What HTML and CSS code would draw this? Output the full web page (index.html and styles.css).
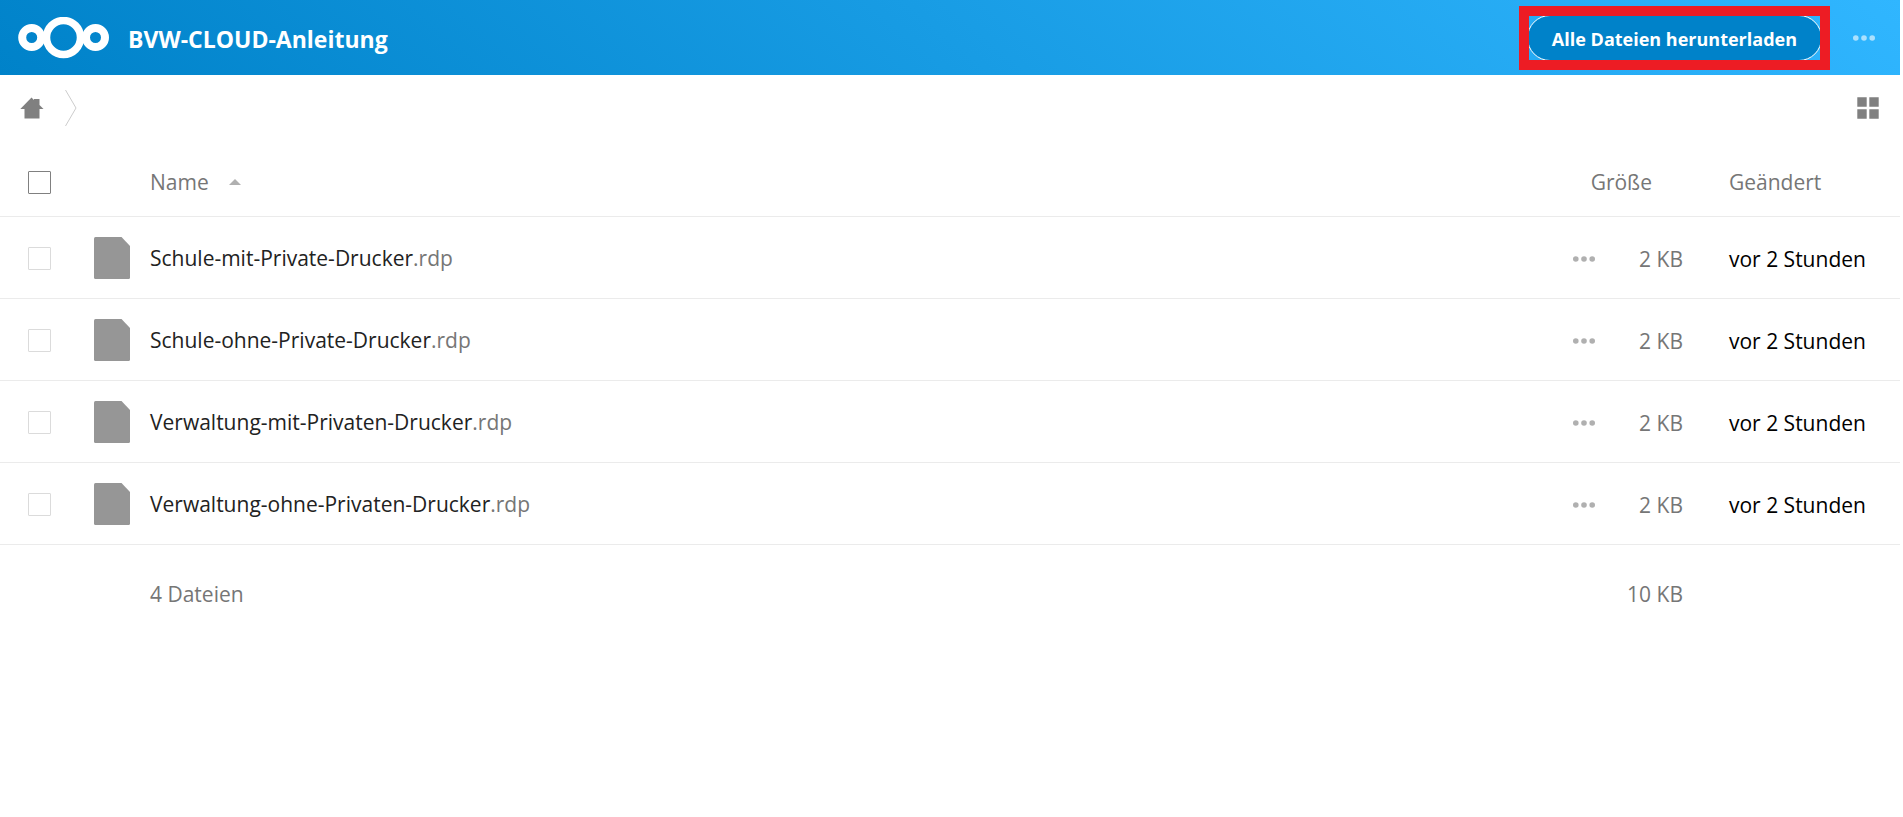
FILE: index.html
```
<!DOCTYPE html>
<html lang="de">
<head>
<meta charset="utf-8">
<title>BVW-CLOUD-Anleitung</title>
<link rel="stylesheet" href="styles.css">
</head>
<body>
    <svg class="sprite" aria-hidden="true">
        <symbol id="file" viewBox="0 0 36 42"><path d="M1.500 0H27.500L36 9V40.500Q36 42 34.500 42H1.500Q0 42 0 40.500V1.500Q0 0 1.500 0Z"/></symbol>
        <symbol id="more" viewBox="0 0 22 6"><circle cx="2.800" cy="3" r="2.800"/><circle cx="11" cy="3" r="2.800"/><circle cx="19.200" cy="3" r="2.800"/></symbol>
    </svg>
    <header class="header">
        <a class="brand" href="#">
            <svg class="logo" viewBox="0 0 92 42" fill="none" stroke="#fff">
                <circle cx="13.700" cy="20.500" r="9.500" stroke-width="8"/>
                <circle cx="45.500" cy="20.500" r="17" stroke-width="7.500"/>
                <circle cx="77.500" cy="20.500" r="9.500" stroke-width="8"/>
            </svg>
            <h1 class="title">BVW-CLOUD-Anleitung</h1>
        </a>
        <div class="header-right">
            <div class="highlight"><button class="download">Alle Dateien herunterladen</button></div>
            <button class="header-menu" aria-label="Weitere Aktionen"><svg class="dots"><use href="#more"/></svg></button>
        </div>
    </header>
    <main class="content">
        <div class="controls">
            <nav class="breadcrumb">
                <a class="home" href="#" aria-label="Startseite"><svg width="24" height="22" viewBox="0 0 24 22"><path d="M11.500 0.500L14 3V2H19.500V8L23.500 12H19.500V21.500H4.500V12H0.300Z"/></svg></a>
                <svg class="crumb" width="12" height="36" viewBox="0 0 12 36"><path d="M0.500 0L11 18L0.500 36"/></svg>
            </nav>
            <button class="view" aria-label="Kachelansicht"><svg width="22" height="22" viewBox="0 0 22 22"><path d="M0.300 0.300h9.400v9.400H0.300zM12.300 0.300h9.400v9.400H12.300zM0.300 12.300h9.400v9.400H0.300zM12.300 12.300h9.400v9.400H12.300z"/></svg></button>
        </div>
        <table class="files">
            <colgroup>
                <col class="col-select">
                <col class="col-icon">
                <col>
                <col class="col-action">
                <col class="col-size">
                <col class="col-date">
            </colgroup>
            <thead>
                <tr>
                    <th class="select"><input type="checkbox" class="check check-all" aria-label="Alle auswählen"></th>
                    <th class="icon"></th>
                    <th class="name"><button class="sort">Name <svg class="caret" width="12" height="6" viewBox="0 0 12 6"><path d="M0 6L6 0L12 6Z"/></svg></button></th>
                    <th class="size" colspan="2"><button class="sort sort-size">Größe</button></th>
                    <th class="date"><button class="sort">Geändert</button></th>
                </tr>
            </thead>
            <tbody>
                <tr>
                    <td class="select"><input type="checkbox" class="check" aria-label="Schule-mit-Private-Drucker.rdp"></td>
                    <td class="icon"><svg class="file"><use href="#file"/></svg></td>
                    <td class="name"><a href="#">Schule-mit-Private-Drucker<span class="ext">.rdp</span></a></td>
                    <td class="action"><button aria-label="Aktionen"><svg class="dots"><use href="#more"/></svg></button></td>
                    <td class="size">2 KB</td>
                    <td class="date">vor 2 Stunden</td>
                </tr>
                <tr>
                    <td class="select"><input type="checkbox" class="check" aria-label="Schule-ohne-Private-Drucker.rdp"></td>
                    <td class="icon"><svg class="file"><use href="#file"/></svg></td>
                    <td class="name"><a href="#">Schule-ohne-Private-Drucker<span class="ext">.rdp</span></a></td>
                    <td class="action"><button aria-label="Aktionen"><svg class="dots"><use href="#more"/></svg></button></td>
                    <td class="size">2 KB</td>
                    <td class="date">vor 2 Stunden</td>
                </tr>
                <tr>
                    <td class="select"><input type="checkbox" class="check" aria-label="Verwaltung-mit-Privaten-Drucker.rdp"></td>
                    <td class="icon"><svg class="file"><use href="#file"/></svg></td>
                    <td class="name"><a href="#">Verwaltung-mit-Privaten-Drucker<span class="ext">.rdp</span></a></td>
                    <td class="action"><button aria-label="Aktionen"><svg class="dots"><use href="#more"/></svg></button></td>
                    <td class="size">2 KB</td>
                    <td class="date">vor 2 Stunden</td>
                </tr>
                <tr>
                    <td class="select"><input type="checkbox" class="check" aria-label="Verwaltung-ohne-Privaten-Drucker.rdp"></td>
                    <td class="icon"><svg class="file"><use href="#file"/></svg></td>
                    <td class="name"><a href="#">Verwaltung-ohne-Privaten-Drucker<span class="ext">.rdp</span></a></td>
                    <td class="action"><button aria-label="Aktionen"><svg class="dots"><use href="#more"/></svg></button></td>
                    <td class="size">2 KB</td>
                    <td class="date">vor 2 Stunden</td>
                </tr>
            </tbody>
            <tfoot>
                <tr>
                    <td></td>
                    <td></td>
                    <td class="name">4 Dateien</td>
                    <td></td>
                    <td class="size">10 KB</td>
                    <td></td>
                </tr>
            </tfoot>
        </table>
    </main>
</body>
</html>
```
FILE: styles.css
```
*{
    box-sizing: border-box;
}
body{
    margin: 0;
    padding-right: 3px;
    background: #fff;
    color: #000;
    font-family: "Open Sans", "Noto Sans", sans-serif;
    font-size: 21px;
    line-height: 30px;
}
a{
    color: inherit;
    text-decoration: none;
}
button{
    padding: 0;
    border: 0;
    background: none;
    color: inherit;
    font: inherit;
    cursor: pointer;
}
svg{
    display: block;
}
.sprite{
    display: none;
}
.dots{
    width: 22px;
    height: 6px;
    fill: currentColor;
}

/* header */
.header{
    display: flex;
    align-items: center;
    justify-content: space-between;
    height: 75px;
    padding: 0 25px 0 18px;
    background: linear-gradient(40deg, #0082c9 0%, #30b6ff 100%);
    color: #fff;
}
.brand{
    display: flex;
    align-items: center;
    gap: 18px;
}
.logo{
    width: 92px;
    height: 42px;
}
.title{
    margin: 2px 0 0;
    font-size: 23px;
    font-weight: 700;
}
.header-right{
    display: flex;
    align-items: center;
    gap: 23px;
}
.highlight{
    border: 10px solid #ed1c24;
    overflow: hidden;
}
.download{
    display: block;
    height: 46px;
    margin: -1px -2px;
    padding: 2px 24px 0;
    border: 1px solid #fff;
    border-radius: 23px;
    background: #0082c9;
    font-size: 18px;
    font-weight: 700;
}
.header-menu{
    opacity: .6;
}

/* breadcrumb */
.controls{
    display: flex;
    align-items: center;
    justify-content: space-between;
    height: 66px;
    padding: 0 21px 0 20px;
    fill: #808080;
}
.breadcrumb{
    display: flex;
    align-items: center;
    gap: 21px;
}
.crumb{
    fill: none;
    stroke: #ccc;
}

/* file list */
.files{
    width: 100%;
    border-spacing: 0;
    table-layout: fixed;
    color: #767676;
}
.col-select{
    width: 94px;
}
.col-icon{
    width: 56px;
}
.col-action{
    width: 70px;
}
.col-size{
    width: 110px;
}
.col-date{
    width: 171px;
}
.files th,
.files td{
    height: 82px;
    padding: 0;
    border-bottom: 1px solid #ebebeb;
    font-weight: 400;
    text-align: left;
    white-space: nowrap;
    vertical-align: middle;
}
.files th{
    height: 76px;
    padding-top: 7px;
}
.files tfoot td{
    height: 98px;
    border: 0;
}
.files .select{
    padding-left: 28px;
}
.files .action{
    padding-left: 24px;
}
.files .size{
    padding-right: 46px;
    text-align: right;
}
.files tbody .select,
.files tbody .action,
.files tbody .size,
.files tbody .date{
    padding-top: 2px;
}
.check{
    display: block;
    width: 23px;
    height: 23px;
    margin: 0;
    border: 1px solid #dbdbdb;
    border-radius: 1px;
    background: #fff;
    appearance: none;
}
.check-all{
    border-color: #808080;
}
.sort{
    display: flex;
    align-items: center;
    gap: 20px;
}
.sort-size{
    margin-left: auto;
    padding-right: 31px;
}
.caret{
    fill: #b0b0b0;
}
.file{
    width: 36px;
    height: 42px;
    fill: #969696;
}
.action button{
    display: block;
    color: #b0b0b0;
}
tbody .name{
    color: #222;
}
.ext{
    color: #767676;
}
tbody .date{
    color: #000;
}
```
